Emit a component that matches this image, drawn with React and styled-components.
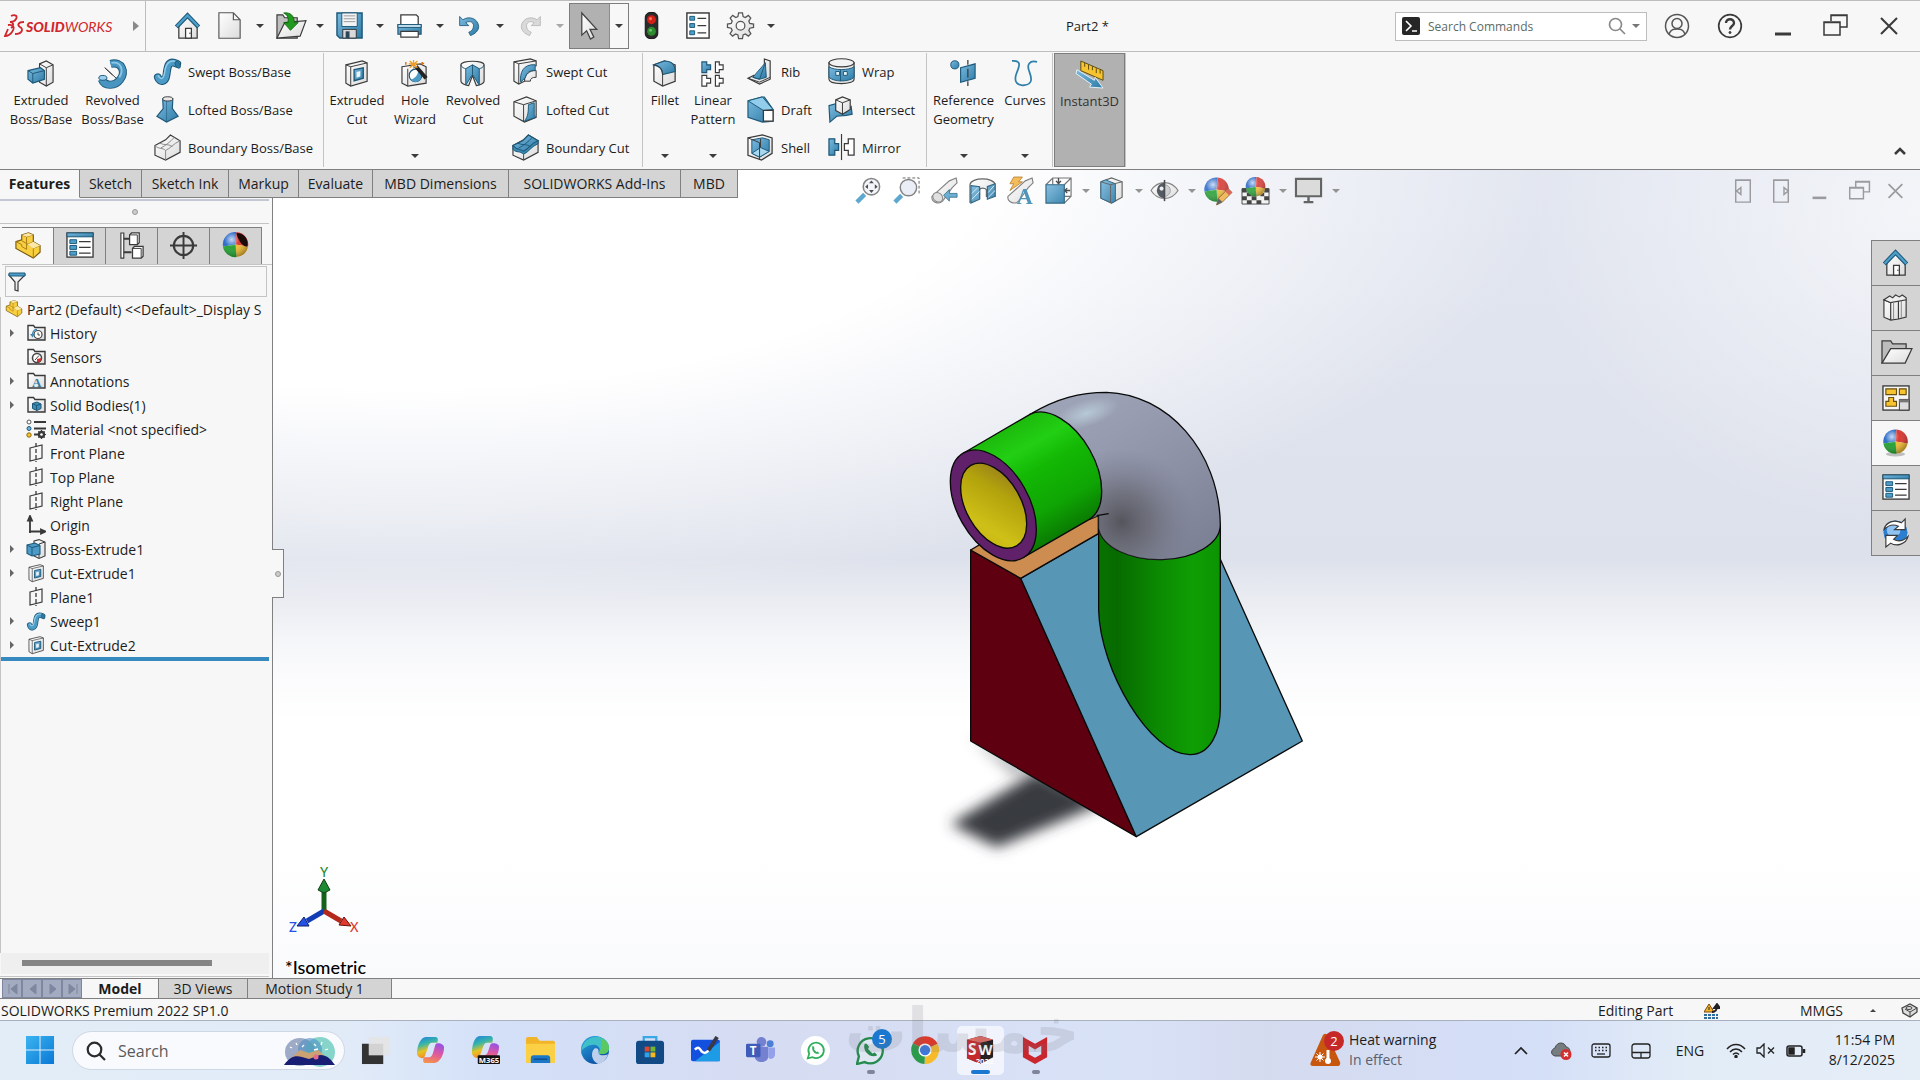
import React from 'react';
import styled, { createGlobalStyle } from 'styled-components';

const GlobalStyle = createGlobalStyle`
  * {
    box-sizing: border-box;
  }

  body {
    margin: 0;
    font-family: 'Open Sans', 'Noto Sans', sans-serif;
    font-size: 14px;
    color: #1c1c1c;
    background: #f7f7f7;
  }

  button {
    padding: 0;
    border: 0;
    background: none;
    font: inherit;
    color: inherit;
    cursor: pointer;
  }

  svg {
    display: block;
    flex-shrink: 0;
  }
`;

const Screen = styled.div`
  display: flex;
  flex-direction: column;
  min-height: 100vh;
`;

/* ---------- icons ---------- */

const K = '#3a3a3a';
const B = 'url(#blue)';
const W = 'url(#silver)';
const D = '#1d5878';

const DefsSvg = styled.svg`
  position: absolute;
`;

const SharedDefs = () => (
  <DefsSvg width="0" height="0" aria-hidden="true">
    <defs>
      <linearGradient id="blue" x1="0" y1="0" x2="1" y2="1">
        <stop offset="0" stopColor="#7dbbe0" />
        <stop offset="1" stopColor="#2c7ba6" />
      </linearGradient>
      <linearGradient id="silver" x1="0" y1="0" x2="1" y2="1">
        <stop offset="0" stopColor="#ffffff" />
        <stop offset="1" stopColor="#dcdcdc" />
      </linearGradient>
      <radialGradient id="gloss" cx="0.35" cy="0.3" r="0.75">
        <stop offset="0" stopColor="#fff" stopOpacity="0.75" />
        <stop offset="0.4" stopColor="#fff" stopOpacity="0.05" />
        <stop offset="1" stopColor="#000" stopOpacity="0.35" />
      </radialGradient>
      <linearGradient id="copilot" x1="0" y1="0" x2="0.3" y2="1">
        <stop offset="0" stopColor="#1e7fe0" />
        <stop offset="0.4" stopColor="#38b6a8" />
        <stop offset="0.7" stopColor="#e8c320" />
        <stop offset="1" stopColor="#f08a2c" />
      </linearGradient>
      <linearGradient id="copilotWarm" x1="0.6" y1="0" x2="0.3" y2="1">
        <stop offset="0" stopColor="#9b52e0" />
        <stop offset="0.5" stopColor="#e05a9c" />
        <stop offset="1" stopColor="#f7924a" />
      </linearGradient>
      <linearGradient id="winBlue" x1="0" y1="0" x2="1" y2="1">
        <stop offset="0" stopColor="#3bb4f0" />
        <stop offset="1" stopColor="#0a78d6" />
      </linearGradient>
      <linearGradient id="edge" x1="0" y1="0" x2="0.6" y2="1">
        <stop offset="0" stopColor="#2aa8e6" />
        <stop offset="1" stopColor="#0b4fa0" />
      </linearGradient>
    </defs>
  </DefsSvg>
);

const ball = (cx, cy, r) => (
  <g>
    <path d={`M${cx} ${cy}L${cx - r} ${cy + 2}A${r} ${r} 0 0 1 ${cx + 1} ${cy - r}z`} fill="#2566c8" />
    <path d={`M${cx} ${cy}L${cx + 1} ${cy - r}A${r} ${r} 0 0 1 ${cx + r} ${cy + 2}z`} fill="#d8302a" />
    <path d={`M${cx} ${cy}L${cx + r} ${cy + 2}A${r} ${r} 0 0 1 ${cx + 1} ${cy + r}z`} fill="#f0b92e" />
    <path d={`M${cx} ${cy}L${cx + 1} ${cy + r}A${r} ${r} 0 0 1 ${cx - r} ${cy + 2}z`} fill="#1e9e2c" />
    <circle cx={cx} cy={cy} r={r} fill="url(#gloss)" />
  </g>
);

const folder = (
  <path d="M2 17V2.5h5.500l1.500 2h10V17z" fill={W} stroke={K} strokeWidth="1.400" />
);

const art = {
  home: (
    <>
      <path d="M5 14V27H24V14L14 5z" fill={W} stroke={K} strokeWidth="1.300" />
      <path d="M12 27V17h6V27z" fill="#fff" stroke={K} strokeWidth="1.300" />
      <path d="M2.500 15.500L14 3.500L25.500 15.500" fill="none" stroke={D} strokeWidth="4.600" />
      <path d="M2.800 15L14 3.500L25.200 15" fill="none" stroke="#4d9fca" strokeWidth="2.400" />
      <circle cx="16.500" cy="22" r="0.800" fill={K} />
    </>
  ),
  page: (
    <path d="M3 0.800H18L25 8V27.200H3zM18 0.800V8H25" fill={W} stroke="#555" strokeWidth="1.200" />
  ),
  open: (
    <>
      <path d="M1 27V3h6l2 3h13v21z" fill="#bfbfbf" stroke={K} strokeWidth="1.200" />
      <path d="M1 27L9 11L31 9L25 25z" fill={W} stroke={K} strokeWidth="1.200" />
      <path d="M8 1C15 0 19 4 19 11H23L15 19L8 11H12.500C13 6 12 3 8 1z" fill="#1e9a1e" stroke="#0b5a0b" strokeWidth="0.800" />
    </>
  ),
  save: (
    <>
      <path d="M1 1H27V27H4L1 24z" fill={B} stroke={D} strokeWidth="1.500" />
      <path d="M6 1H22V15H6z" fill="#f4f4f4" stroke={D} />
      <path d="M8 4H20M8 7H20M8 10H20" stroke="#999" />
      <path d="M7 18H21V27H7z" fill="#d9d9d9" stroke="#333" />
      <path d="M10 20H14V27H10z" fill="#2b4658" />
    </>
  ),
  print: (
    <>
      <path d="M5 14V3H21L23 5V14z" fill="#fff" stroke={K} strokeWidth="1.300" />
      <path d="M2 13H26V23H2z" fill={B} stroke={D} strokeWidth="1.200" />
      <path d="M2 13H26V16H2z" fill="#c9e2f1" stroke={D} />
      <path d="M5 20H23V26H5z" fill="#fff" stroke={K} strokeWidth="1.200" />
    </>
  ),
  undo: (
    <path d="M2 3V14H13L9.500 10.500C15 7 20 11 18.500 16C18 19 16 21 13 22L15 26C21 24 25 20 25 15C24 5 13 2 6 7z" fill={B} stroke={D} strokeWidth="1" />
  ),
  redo: (
    <path d="M27 3V14H16L19.500 10.500C14 7 9 11 10.500 16C11 19 13 21 16 22L14 26C8 24 4 20 4 15C5 5 16 2 23 7z" fill="#d9d9d9" stroke="#b5b5b5" strokeWidth="1" />
  ),
  pointer: (
    <path d="M6 1V24L11 19.500L15 28L18.500 26L14.500 18H21.500z" fill={W} stroke="#444" strokeWidth="1.300" />
  ),
  traffic: (
    <>
      <rect x="7.500" y="0.500" width="13" height="27" rx="5" fill="#2b2b2b" stroke="#111" />
      <circle cx="14" cy="8" r="4.600" fill="#d32016" />
      <circle cx="14" cy="20" r="4.600" fill="#2d8a2d" />
      <circle cx="13" cy="7" r="1.500" fill="#ff7a66" />
      <circle cx="13" cy="19" r="1.500" fill="#6cc66c" />
    </>
  ),
  list: (
    <>
      <rect x="3" y="1" width="23" height="26" fill="#fff" stroke={K} strokeWidth="1.500" />
      <path d="M6 4.500h5v4h-5zM6 12h5v4h-5zM6 19.500h5v4h-5z" fill="#4d9fca" stroke={D} />
      <path d="M14 6.500h9M14 14h9M14 21.500h9" stroke={K} strokeWidth="1.300" />
    </>
  ),
  gear: (
    <>
      <path
        d="M12 1h4l.7 3.800 2.200.9 3.200-2.200 2.500 2.700-2 3.200 1 2.400 3.900.7v3.500l-3.900.8-1 2.300 2.100 3.300-2.600 2.600-3.200-2.200-2.200.9L16 27.500h-4l-.7-3.800-2.300-.9L5.800 25l-2.600-2.600 2.200-3.300-1-2.300-3.900-.8v-3.500l3.900-.7 1-2.400-2.100-3.200L5.900 3.500l3.200 2.200 2.200-.9z"
        fill={W}
        stroke="#555"
        strokeWidth="1.300"
      />
      <circle cx="14" cy="14.200" r="4.500" fill="#f7f7f7" stroke="#555" strokeWidth="1.300" />
    </>
  ),
  extBoss: (
    <>
      <path d="M13 4L20 1L27 5V23L20 27L13 23z" fill={W} stroke={K} strokeWidth="1.200" />
      <path d="M20 8L27 5M20 8V27M13 4L20 8" stroke={K} fill="none" />
      <path d="M1 11L14 8L18 11V20L6 24L1 20z" fill={B} stroke={D} strokeWidth="1.200" />
      <path d="M1 11L6 14L18 11M6 14V24" stroke={D} fill="none" />
    </>
  ),
  revBoss: (
    <>
      <path d="M12 4C24 1 28 13 22 20C17 27 6 28 3 20" fill="none" stroke={D} strokeWidth="8.500" />
      <path d="M12 4C24 1 28 13 22 20C17 27 6 28 3 20" fill="none" stroke="#4795c0" strokeWidth="6.500" />
      <path d="M13 3C23 1 26 11 21 18" fill="none" stroke="#8cc6e6" strokeWidth="2" />
      <ellipse cx="4" cy="18.500" rx="4.200" ry="2.500" fill="#9bd0ec" stroke={D} />
      <path d="M6 8L14 15.500M6 8L18 19" stroke={K} />
    </>
  ),
  sweep: (
    <>
      <path d="M4 20C6 26 12 25 13 17C14 8 15 2 24 6" fill="none" stroke={D} strokeWidth="8.200" strokeLinecap="round" />
      <path d="M4 20C6 26 12 25 13 17C14 8 15 2 24 6" fill="none" stroke="#4c9bc7" strokeWidth="6" strokeLinecap="round" />
      <path d="M4 18C7 23 10 22 11 15C12 6 16 2 22 3.500" fill="none" stroke="#90cbe8" strokeWidth="1.600" />
      <ellipse cx="24.500" cy="7" rx="2.200" ry="4" transform="rotate(-30 24.500 7)" fill="#2f7ba3" stroke={D} strokeWidth="0.800" />
    </>
  ),
  loft: (
    <>
      <path d="M9 3L9.500 13L3 21L13 27L25 21L19 13L19.500 3z" fill={B} stroke={D} strokeWidth="1.200" />
      <path d="M13 27L13 5" stroke={D} strokeWidth="0.600" />
      <ellipse cx="14.200" cy="3" rx="5.200" ry="2.200" fill="#e9e9e9" stroke={K} />
    </>
  ),
  boundary: (
    <>
      <path d="M1 12L12 6L17 1L27 7V19L12 27L1 22z" fill={W} stroke={K} strokeWidth="1.200" />
      <path d="M1 12C5 16 9 14 12 17C17 15 20 10 27 7M12 17V27M6 9.500C11 12 15 10 19 13M7 14.500C12 12 17 8 21 3.500" fill="none" stroke="#888" />
    </>
  ),
  extCut: (
    <>
      <path d="M3 5L20 1L25 3V22L8 27L3 24z" fill={W} stroke={K} strokeWidth="1.200" />
      <path d="M3 5L8 7L25 3M8 7V27" fill="none" stroke={K} />
      <path d="M11.500 10L21 8V19L11.500 21.500z" fill={B} stroke={D} strokeWidth="1.400" />
      <path d="M14 12.500L18 11.500V17L14 18.500z" fill="#e9f4fb" />
    </>
  ),
  hole: (
    <>
      <path d="M1 7L20 4L26 7V24L7 27L1 24z" fill={W} stroke={K} strokeWidth="1.200" />
      <path d="M7 9V27" stroke={K} />
      <circle cx="15" cy="16" r="6.500" fill="#fff" stroke={D} strokeWidth="1.200" />
      <path d="M10 20C14 20 18 15 18 10C22 13 22 18 19 21C16 24 12 23 10 20z" fill="#4c9bc7" />
      <path d="M14 5L26 19" stroke="#222" strokeWidth="4" />
      <path d="M13 4L16 7" stroke="#ddd" strokeWidth="3" />
      <path d="M13 0v9M8 4h10M9 1l8 7M17 1l-8 7" stroke="#f29a1f" strokeWidth="1.300" />
      <path d="M22 2v3M5 2v3M21 3.500h3" stroke="#d8701a" strokeWidth="1.500" />
    </>
  ),
  revCut: (
    <>
      <path d="M2 5C2 0 26 0 26 5V22C26 24 22 26 18 26.500L14 16L10 26.500C6 26 2 24 2 22z" fill={W} stroke={K} strokeWidth="1.200" />
      <path d="M14 5L7 9V26L14 15L21 26V9z" fill={B} stroke={D} />
      <path d="M14 5V15M2 5C3 8 5 8.500 7 9M26 5C25 8 23 8.500 21 9" fill="none" stroke={D} />
    </>
  ),
  sweptCut: (
    <>
      <path d="M2 4L19 1L25 3V8C17 9 13 13 13 24L7 27L2 24z" fill={W} stroke={K} strokeWidth="1.200" />
      <path d="M13 24C13 17 18 13 25 13V20C21 20 19 21 19 24z" fill={W} stroke={K} />
      <path d="M24 7C11 6 8 16 9 25L14 20C15 15 19 12 24 13z" fill={B} stroke={D} />
      <path d="M2 4L7 6L25 3M7 6V27" fill="none" stroke={K} />
    </>
  ),
  loftedCut: (
    <>
      <path d="M2 6L15 1L25 5V22L13 27L2 21z" fill={W} stroke={K} strokeWidth="1.200" />
      <path d="M2 6L12 9L25 5M12 9V27" fill="none" stroke={K} />
      <path d="M17 9L23 7V18C23 21 26 22 22 23L13 26C17 21 17 15 17 9z" fill={B} stroke={D} />
    </>
  ),
  boundaryCut: (
    <>
      <path d="M1 12L12 6L17 1L27 7V19L12 27L1 22z" fill={W} stroke={K} strokeWidth="1.200" />
      <path d="M1 12L11 7L17 1L27 7C20 10 18 15 12 18C8 15 5 17 1 12z" fill={B} stroke={D} strokeWidth="1.200" />
      <path d="M1 12V16C5 20 8 17 12 21C18 18 20 13 27 10V7C20 10 18 15 12 18C8 15 5 17 1 12z" fill="#3b89b3" stroke={D} />
      <path d="M12 21V27M6 9.500C11 12 15 10 19 13M7 14.500C12 12 17 8 21 3.500" fill="none" stroke={D} />
    </>
  ),
  fillet: (
    <>
      <path d="M3 5L14 1L25 5V22L12 27L3 22z" fill={W} stroke={K} strokeWidth="1.300" />
      <path d="M3 5L14 1C20 1 25 3 25 12L12 15C12 9 8 6 3 5z" fill={B} stroke={D} strokeWidth="1.200" />
      <path d="M12 15V27M3 5C8 6 12 9 12 15" fill="none" stroke={K} />
    </>
  ),
  linear: (
    <>
      <path d="M3 2H8V5H12V10H8V13H3z" fill={B} stroke={D} strokeWidth="1.200" />
      <path d="M17 2H21V5H25V10H21V13H17zM3 16H8V19H12V24H8V27H3zM17 16H21V19H25V24H21V27H17z" fill="#fff" stroke={K} strokeWidth="1.200" />
    </>
  ),
  rib: (
    <>
      <path d="M18 1L24 3V22L13 27L1 21L7 18L18 20z" fill={W} stroke={K} strokeWidth="1.200" />
      <path d="M19 5L20 20L13 22L6 20z" fill={B} stroke={D} />
      <path d="M6 20L13 22L19 5" fill="none" stroke={D} />
      <path d="M1 21L13 25L24 20" fill="none" stroke={K} />
    </>
  ),
  draft: (
    <>
      <path d="M1 5L15 1H18L27 14V26L16 27L1 22z" fill={B} stroke={D} strokeWidth="1.200" />
      <path d="M1 5L16 1L27 14L17 15z" fill="#92cdec" stroke={D} />
      <path d="M17 15H27V26H17z" fill="#fff" stroke={K} strokeWidth="1.300" />
    </>
  ),
  shell: (
    <>
      <path d="M1 4L16 1L26 4V20L15 27L1 22z" fill={W} stroke={K} strokeWidth="1.300" />
      <path d="M5 6L16 4L23 6V18L13 24L5 20z" fill={B} stroke={D} />
      <path d="M5 20L14 14L23 18L13 24z" fill="#a8d8f0" stroke={D} />
      <path d="M14 5V14M1 4L13 9V26" fill="none" stroke={K} />
    </>
  ),
  wrap: (
    <>
      <path d="M1 5V22C1 28 27 28 27 22V5z" fill={W} stroke={K} strokeWidth="1.200" />
      <path d="M1 9C6 13 22 13 27 9V20C22 25 6 25 1 20z" fill={B} stroke={D} />
      <path d="M8 14H12V18H8zM16 14H20V18H16zM13 12V24" fill="#e3f2fa" stroke={D} />
      <ellipse cx="14" cy="5" rx="13" ry="4.200" fill="#f2f2f2" stroke={K} strokeWidth="1.200" />
    </>
  ),
  intersect: (
    <>
      <path d="M1 10L8 8V15L18 17L24 11L25 19L19 20L9 21L2 27z" fill={B} stroke={D} strokeWidth="1.200" />
      <path d="M8 4L15 1L23 4V14L15 19L8 15z" fill={W} stroke={K} strokeWidth="1.200" />
      <path d="M8 4L15 7L23 4M15 7V19" fill="none" stroke={K} />
    </>
  ),
  mirror: (
    <>
      <path d="M1 5H7V10H11V17H7V22H1z" fill={B} stroke={D} strokeWidth="1.300" />
      <path d="M27 5H21V10H17V17H21V22H27z" fill="#fff" stroke={K} strokeWidth="1.300" />
      <path d="M14 0V27" stroke={K} strokeWidth="1.200" />
    </>
  ),
  refGeo: (
    <>
      <circle cx="5" cy="5" r="4.200" fill={B} stroke={D} />
      <path d="M11 8L26 4V19L11 23z" fill={B} stroke={D} strokeWidth="1.200" />
      <path d="M18.500 0V5M18.500 9V18M18.500 22V27" stroke={K} strokeWidth="1.300" />
    </>
  ),
  curves: (
    <path d="M1 1C11 0 9 6 6 13C2 23 7 27 14 26C22 25 22 20 19 12C16 5 19 0 27 2" fill="none" stroke="#2f7fa9" strokeWidth="1.800" />
  ),
  instant: (
    <>
      <path d="M5 0L28 10V20L5 10z" fill="#f7c32e" stroke="#5a4a10" />
      <path d="M9 2v4M13 4v5M17 5.500v4M21 7.500v5M25 9v4" stroke="#5a4a10" />
      <path d="M1 9L19 20L20 17L28 28L14 27L16 24L0 13z" fill={B} stroke="#e6f2f9" strokeWidth="1" />
    </>
  ),
  zoomFit: (
    <>
      <path d="M10 18L2 26" stroke="#4d9fca" strokeWidth="4.500" />
      <circle cx="17" cy="10" r="8.500" fill="#f3f5fa" stroke="#777" strokeWidth="1.600" />
      <path d="M17 3.500l2.500 3h-5zM17 16.500l2.500-3h-5zM10.500 10l3-2.500v5zM23.500 10l-3-2.500v5z" fill={K} />
    </>
  ),
  zoomArea: (
    <>
      <path d="M9 19L2 26" stroke="#4d9fca" strokeWidth="4.500" />
      <path d="M10 1H27V18" fill="none" stroke="#555" strokeDasharray="3 2" />
      <circle cx="16" cy="11" r="8.500" fill="#e9edf6" stroke="#777" strokeWidth="1.500" />
    </>
  ),
  prevView: (
    <>
      <path d="M1 20L19 4L26 1L27 6L22 11L12 25C8 29 0 26 1 20z" fill={W} stroke="#777" strokeWidth="1.200" />
      <ellipse cx="7" cy="21" rx="5.500" ry="4.500" transform="rotate(40 7 21)" fill="#ddd" stroke="#777" />
      <path d="M13 19L19 13V17H27V21H19V25z" fill="#5ba7cf" stroke={D} strokeWidth="0.800" />
    </>
  ),
  section: (
    <>
      <path d="M1 8C2 0 26 0 27 8V20H18V13C16 11 12 11 11 13V22L1 26z" fill={W} stroke="#555" strokeWidth="1.200" />
      <path d="M2 9L11 10V23L2 27zM19 10L27 7V20L19 23z" fill={B} stroke={D} strokeWidth="1.200" />
      <path d="M3 17L9 11M3 23L11 15M20 16L26 9M20 21L27 14" stroke="#d6ecf8" />
    </>
  ),
  annot: (
    <>
      <path d="M1 20L19 4L26 1L27 6L22 11L12 25C8 29 0 26 1 20z" fill={W} stroke="#777" strokeWidth="1.200" />
      <path d="M7 0H16L12 5H16L3 14L7 7H3z" fill="#f5b54a" stroke="#a86f18" strokeWidth="0.800" />
      <text x="10" y="28" fontFamily="Liberation Serif, serif" fontSize="23" fontWeight="700" fill="#3d8ab5">A</text>
    </>
  ),
  orient: (
    <>
      <path d="M1 8L8 1H27V20L20 27M20 8L27 1M8 1V8M20 20H27" fill="none" stroke="#666" strokeWidth="1.200" />
      <path d="M1 8H20V27H1z" fill={B} stroke={D} strokeWidth="1.200" />
      <path d="M14 1V6M11.500 4L14 7L16.500 4M26 14H21M23 11.500L20.500 14L23 16.500" fill="none" stroke={K} strokeWidth="1.400" />
    </>
  ),
  display: (
    <>
      <path d="M3 5L14 1L25 5V21L14 27L3 22z" fill={W} stroke="#555" strokeWidth="1.200" />
      <path d="M3 5L8 3L18 7V25L14 27L3 22z" fill={B} stroke={D} />
      <path d="M3 5L13 8L25 5M13 8V27" fill="none" stroke="#555" />
    </>
  ),
  hide: (
    <>
      <path d="M0 14C7 3 21 3 28 14C21 25 7 25 0 14z" fill={W} stroke="#777" strokeWidth="1.200" />
      <path d="M14 6A8 8 0 0 0 14 22z" fill="#444b55" />
      <path d="M14 8A6 6 0 0 1 14 20" fill="#c9ccd2" stroke="#999" />
      <circle cx="11" cy="12" r="2.200" fill="#e9edf2" />
      <path d="M14 3V25" stroke={K} strokeWidth="1.600" />
    </>
  ),
  appearance: (
    <>
      {ball(13, 13, 12.5)}
      <path d="M13 29L15 22L25 12L29 16L19 26z" fill="#f2b34e" stroke="#6a4a1a" strokeWidth="0.800" />
      <path d="M22 15L25 12L29 16L26 19z" fill="#d8564a" />
      <path d="M13 29L15 22L19 26z" fill="#555" />
    </>
  ),
  scene: (
    <>
      <path d="M0 12H28V28H0z" fill="#f4f4f4" stroke={K} />
      <path d="M0 12h5v4H0zM23 12h5v4h-5zM5 16h5v4H5zM19 16h4v4h-4zM0 20h5v4H0zM10 20h5v4h-5zM23 20h5v4h-5zM5 24h5v4H5zM15 24h5v4h-5z" fill="#333" />
      {ball(14, 10, 10)}
    </>
  ),
  monitor: (
    <>
      <path d="M1 2H27V20H1z" fill="#d9d9d9" stroke="#555" strokeWidth="2.200" />
      <path d="M14 20V25M9 26H19" stroke="#555" strokeWidth="2.500" />
    </>
  ),
  part: (
    <>
      <path d="M2 10L8 8V3L15 1L20 3V10L27 14V21L20 27L2 17z" fill="#f8cf3f" stroke="#7a5a10" strokeWidth="1.200" />
      <path d="M2 10L8 13V15L13 18V12L8 9M13 12L20 16V27M20 17L27 14M13 5V12M8 3L13 5L20 3M20 10L14 13" fill="none" stroke="#a97c18" />
      <path d="M8 3L15 1L20 3L13 5zM14 13L20 10L27 14L20 17z" fill="#fbe7a6" />
    </>
  ),
  propMgr: (
    <>
      <rect x="1" y="1" width="27" height="25" fill="#fff" stroke={K} strokeWidth="1.400" />
      <path d="M1 1H28V5H1z" fill={B} stroke={D} />
      <path d="M4 8h7v4H4zM4 14h7v4H4zM4 20h7v4H4z" fill="#4d9fca" stroke={D} />
      <path d="M13.500 10h12M13.500 16h12M13.500 22h12" stroke={K} strokeWidth="1.300" />
    </>
  ),
  config: (
    <>
      <path d="M3 1H6V27H3z" fill="#fff" stroke={K} strokeWidth="1.200" />
      <path d="M6 7H12M6 21H14" stroke={K} strokeWidth="2" />
      <path d="M12 3L14 1H22V11L20 13H12zM15 17L17 15H26V25L24 27H15z" fill="#fff" stroke={K} strokeWidth="1.300" />
      <path d="M12 3H20V13M15 17H24V27" fill="none" stroke={K} />
    </>
  ),
  target: (
    <>
      <circle cx="14" cy="14" r="10" fill="none" stroke={K} strokeWidth="2.200" />
      <path d="M14 0V28M0 14H28" stroke={K} strokeWidth="2" />
    </>
  ),
  dispMgr: (
    <>
      {ball(14, 13, 13)}
      <path d="M15 1C24 1 28 9 26 15C22 16 16 8 15 1z" fill="#1c0b0b" />
    </>
  ),
  books: (
    <>
      <path d="M2 6L9 9V27L2 24zM10 5L17 8V26L9 27V9zM18 4L25 6V24L17 26V8z" fill={W} stroke={K} strokeWidth="1.200" />
      <path d="M2 6L8 2L11 4L14 1L18 3L21 1L25 4V6L9 9z" fill="#eee" stroke={K} strokeWidth="1.200" />
      <path d="M12 8V26M20 7V25" stroke="#888" />
    </>
  ),
  folderOpen: (
    <>
      <path d="M0 25V2h9l2 3h14v6" fill="#bcbcbc" stroke={K} strokeWidth="1.300" />
      <path d="M0 25L9 10H31L24 25z" fill={W} stroke={K} strokeWidth="1.300" />
    </>
  ),
  palette: (
    <>
      <rect x="1" y="2" width="27" height="25" fill="#f6f6f6" stroke={K} strokeWidth="1.400" />
      <path d="M4 5H15V11H4zM18 5H25V11H18zM4 23V18H7V14H12V18H15V23z" fill="#f7c32e" stroke="#6a5010" strokeWidth="1.200" />
      <path d="M18 16H28V27H18z" fill="#ddd" stroke={K} />
      <path d="M18 16H28V19H18z" fill="#777" />
    </>
  ),
  sphere: (
    <>
      <ellipse cx="14" cy="26" rx="10" ry="2.500" fill="#999" fillOpacity="0.600" />
      {ball(14, 13, 12.5)}
    </>
  ),
  forum: (
    <>
      <circle cx="14" cy="14" r="13" fill="#2c7fd0" stroke="#ddd" />
      <circle cx="12" cy="12" r="7" fill="#a8d4fb" fillOpacity="0.800" />
      <path d="M2 11C4 3 13 0 20 4L24 0V11H13L17 7.500C12 5 7 6 2 11z" fill="#fff" stroke={K} strokeWidth="1.200" />
      <path d="M27 18C25 26 15 29 9 25L4 29V17H16L12 21C17 24 22 23 27 18z" fill="#fff" stroke={K} strokeWidth="1.200" />
    </>
  ),
};

// 20px drawings used in the feature tree
const treeArt = {
  history: (
    <>
      {folder}
      <circle cx="12" cy="11.500" r="4" fill="#fff" stroke="#444" strokeWidth="1.200" />
      <path d="M12 9.500V12H14" stroke="#444" fill="none" />
      <path d="M4 11L6.500 14.500L9 11z" fill="#3d8ab5" />
      <path d="M6.500 12C6.500 8 9 6.500 11 6.500" stroke="#3d8ab5" strokeWidth="1.500" fill="none" />
    </>
  ),
  sensors: (
    <>
      {folder}
      <circle cx="11" cy="11" r="4.500" fill="#fff" stroke="#444" strokeWidth="1.500" />
      <path d="M11 15.500A4.500 4.500 0 0 0 15.500 11L11 12z" fill="#d32f2f" />
      <path d="M9 13L13 8.500" stroke="#444" />
    </>
  ),
  annotations: (
    <>
      {folder}
      <text x="6" y="16" fontFamily="Liberation Serif, serif" fontSize="13" fontWeight="700" fill="#2f7ba3">A</text>
    </>
  ),
  bodies: (
    <>
      {folder}
      <path d="M6.500 8.500L11 7L15 9V13.500L11 15.500L6.500 13.500z" fill="#3d8ab5" stroke={D} />
      <path d="M6.500 8.500L10.500 10.500L15 9M10.500 10.500V15.500" stroke={D} fill="none" />
    </>
  ),
  material: (
    <>
      <path d="M8 3h12M8 9.500h12M8 15.500h5" stroke={K} strokeWidth="1.800" />
      <circle cx="3" cy="3" r="2" fill="#fff" stroke="#555" />
      <circle cx="3" cy="9.500" r="2" fill="#6bb3da" stroke={D} />
      <circle cx="3" cy="16" r="2.200" fill="#f7c32e" stroke="#8a6a10" />
      <circle cx="15.500" cy="15.500" r="2.500" fill="none" stroke={K} strokeWidth="2.400" />
      <path d="M15.500 11v9M11 15.500h9M12.300 12.300l6.400 6.400M18.700 12.300l-6.400 6.400" stroke={K} strokeWidth="1.200" />
      <circle cx="15.500" cy="15.500" r="1.300" fill="#fff" />
    </>
  ),
  plane: (
    <>
      <path d="M4 5L16 2V15L4 18z" fill="none" stroke={K} strokeWidth="1.200" />
      <path d="M10 0V19" stroke={K} strokeWidth="1.300" strokeDasharray="4 2" />
    </>
  ),
  origin: (
    <path d="M4 18V4M2 5.500L4 1L6 5.500zM3 16.500H16M15 14.500L19.500 16.500L15 18.500z" fill={K} stroke={K} strokeWidth="1.800" />
  ),
  bossSmall: (
    <>
      <path d="M8 2L13 0.600L19 3V17L13 19.400L8 17z" fill={W} stroke={K} strokeWidth="1.100" />
      <path d="M13 5L19 3M13 5V19" stroke={K} />
      <path d="M1 6L9 4L14 6.500V15L6 17L1 14.500z" fill="#4c9bc7" stroke={D} strokeWidth="1.100" />
      <path d="M1 6L6 8.500L14 6.500M6 8.500V17" stroke={D} />
    </>
  ),
};

const Icon = ({ name, size = 28 }) => (
  <svg width={size} height={size} viewBox="0 0 29 29" fill="none" overflow="visible" aria-hidden="true">
    {art[name]}
  </svg>
);

const TreeIcon = ({ name }) =>
  treeArt[name] ? (
    <svg width="20" height="20" viewBox="0 0 20 20" fill="none" aria-hidden="true">
      {treeArt[name]}
    </svg>
  ) : (
    <Icon name={name} size={19} />
  );

const Caret = styled.span`
  display: inline-block;
  width: 0;
  height: 0;
  border-left: 4px solid transparent;
  border-right: 4px solid transparent;
  border-top: 4px solid ${props => props.$color || '#3c3c3c'};
`;

/* ---------- title bar ---------- */

const TitleBar = styled.header`
  display: flex;
  align-items: center;
  height: 52px;
  padding-right: 5px;
  border-top: 1px solid #bdbdbd;
  border-bottom: 1px solid #bdbdbd;
`;

const Brand = styled.div`
  display: flex;
  align-items: center;
  align-self: stretch;
  width: 146px;
  padding: 0 6px 0 4px;
  margin-right: 21px;
  border-right: 1px solid #bdbdbd;
`;

const BrandName = styled.span`
  font-family: Lato, sans-serif;
  font-size: 14px;
  font-style: italic;
  color: #d1262c;

  b {
    font-weight: 900;
  }
`;

const BrandArrow = styled.button`
  margin-left: auto;
  border-left: 6px solid #8a8a8a;
  border-top: 5px solid transparent;
  border-bottom: 5px solid transparent;
`;

const ToolButton = styled.button`
  display: flex;
  align-items: center;
  justify-content: center;
  width: ${props => props.$w || 42}px;
  height: 44px;
`;

const PointerGroup = styled.div`
  display: flex;
  border: 1px solid #7d7d7d;

  button:first-child {
    background: #b1b1b1;
    border-right: 1px solid #8c8c8c;
  }
`;

const DocTitle = styled.h1`
  flex: 1;
  margin: 0;
  font-size: 13px;
  font-weight: 400;
  text-align: center;
`;

const SearchBox = styled.label`
  display: flex;
  align-items: center;
  width: 252px;
  height: 29px;
  padding: 0 0 0 6px;
  margin-right: 3px;
  border: 1px solid #bdbdbd;
  background: #fff;

  input {
    flex: 1;
    min-width: 0;
    padding: 0 0 0 8px;
    border: 0;
    outline: 0;
    font: inherit;
    font-size: 12px;
  }

  input::placeholder {
    color: #5c6b66;
    opacity: 1;
  }
`;

const quickTools = [
  { name: 'page', label: 'New' },
  { name: 'open', label: 'Open' },
  { name: 'save', label: 'Save' },
  { name: 'print', label: 'Print' },
  { name: 'undo', label: 'Undo', size: 24 },
  { name: 'redo', label: 'Redo', size: 24, muted: true },
];

const windowGlyphs = {
  previous: <path d="M1 1H18V27H1zM1 1.500H18M7 10L2 14L7 18z" />,
  next: <path d="M1 1H18V27H1zM1 1.500H18M13 10L18 14L13 18z" />,
  minimize: <path d="M2 22H18" strokeWidth="3" />,
  restore: <path d="M8 9V3H24V15H17M1 10H17V23H1zM1 10.500H17M8 3.500H24" />,
  close: <path d="M2 6L18 22M18 6L2 22" strokeWidth="2" />,
};

const WindowGlyph = ({ name }) => (
  <svg width={name === 'restore' ? 25 : 20} height="28" fill="none" stroke={K} strokeWidth="1.500" aria-hidden="true">
    {windowGlyphs[name]}
  </svg>
);

const AppTitleBar = () => (
  <TitleBar>
    <Brand>
      <svg width="22" height="24" viewBox="0 0 22 24" fill="none" stroke="#d1262c" strokeWidth="1.800" aria-hidden="true">
        <path d="M7 2C11 0 14 2 12 5C11 7 8 8 6 8C10 8 10 12 7 14M4 11C10 10 11 14 8 18C6 21 3 22 1 22L4 15" />
        <path d="M20 8C14 8 13 11 16 13C20 15 18 20 11 20" />
      </svg>
      <BrandName><b>SOLID</b>WORKS</BrandName>
      <BrandArrow aria-label="Show menus" />
    </Brand>
    <ToolButton aria-label="Home"><Icon name="home" /></ToolButton>
    {quickTools.map(tool => (
      <React.Fragment key={tool.name}>
        <ToolButton aria-label={tool.label}><Icon name={tool.name} size={tool.size} /></ToolButton>
        <ToolButton $w={18} aria-label={`${tool.label} options`}>
          <Caret $color={tool.muted ? '#a8a8a8' : undefined} />
        </ToolButton>
      </React.Fragment>
    ))}
    <PointerGroup>
      <ToolButton $w={40} aria-label="Select"><Icon name="pointer" /></ToolButton>
      <ToolButton $w={18} aria-label="Select options"><Caret /></ToolButton>
    </PointerGroup>
    <ToolButton $w={46} aria-label="Rebuild"><Icon name="traffic" /></ToolButton>
    <ToolButton $w={45} aria-label="File properties"><Icon name="list" /></ToolButton>
    <ToolButton aria-label="Options"><Icon name="gear" /></ToolButton>
    <ToolButton $w={18} aria-label="More options"><Caret /></ToolButton>
    <DocTitle>Part2 *</DocTitle>
    <SearchBox>
      <svg width="18" height="18" viewBox="0 0 18 18" fill="none" aria-hidden="true">
        <rect width="18" height="18" rx="2" fill="#262626" />
        <path d="M4 4L9 9L4 14M10 14H15" stroke="#fff" strokeWidth="1.600" />
      </svg>
      <input type="text" placeholder="Search Commands" aria-label="Search Commands" />
      <svg width="18" height="18" viewBox="0 0 18 18" fill="none" stroke="#8a8a8a" strokeWidth="1.700" aria-hidden="true">
        <circle cx="7.500" cy="7.500" r="6" />
        <path d="M12 12L17 17" />
      </svg>
      <ToolButton $w={20} aria-label="Search scope"><Caret $color="#777" /></ToolButton>
    </SearchBox>
    <ToolButton $w={53} aria-label="Account">
      <svg width="26" height="26" viewBox="0 0 26 26" fill="none" stroke="#555" strokeWidth="1.500" aria-hidden="true">
        <circle cx="13" cy="13" r="11.500" />
        <circle cx="13" cy="10.500" r="5" />
        <path d="M5 21C7 16 10 16 13 16S19 16 21 21" />
      </svg>
    </ToolButton>
    <ToolButton $w={53} aria-label="Help">
      <svg width="26" height="26" viewBox="0 0 26 26" fill="none" stroke={K} aria-hidden="true">
        <circle cx="13" cy="13" r="11.300" strokeWidth="1.700" />
        <path d="M9 10C9 5 17 5 17 10C17 13 13 13 13 16.500" strokeWidth="2.400" />
        <circle cx="13" cy="19.500" r="1" fill={K} />
      </svg>
    </ToolButton>
    {['minimize', 'restore', 'close'].map(name => (
      <ToolButton key={name} $w={53} aria-label={name}><WindowGlyph name={name} /></ToolButton>
    ))}
  </TitleBar>
);

/* ---------- ribbon ---------- */

const RibbonBar = styled.div`
  position: relative;
  display: flex;
  height: 118px;
  border-bottom: 1px solid #808080;
  font-size: 13px;
`;

const RibbonGroup = styled.section`
  display: flex;
  width: ${props => props.$w}px;
  padding-left: ${props => props.$pad || 0}px;
  margin: 1px 0 2px;
  border-right: 1px solid #c4c4c4;
`;

const BigCommand = styled.button`
  display: flex;
  flex-direction: column;
  align-items: center;
  gap: 3px;
  width: ${props => props.$w}px;
  padding-top: 7px;
  line-height: 19px;
  color: ${props => (props.$active ? '#333' : 'inherit')};
  background: ${props => (props.$active ? '#b1b1b1' : 'none')};
  border: ${props => (props.$active ? '1px solid #7d7d7d' : '0')};

  > ${Caret} {
    margin-top: auto;
    margin-bottom: 9px;
  }
`;

const CommandColumn = styled.div`
  display: flex;
  flex-direction: column;
  gap: 10px;
  padding-top: 5px;
  margin-left: ${props => props.$gap || 0}px;
  width: ${props => props.$w || 'auto'};
`;

const SmallCommand = styled.button`
  display: flex;
  align-items: center;
  gap: 6px;
  height: 28px;
  white-space: nowrap;
`;

const CollapseRibbon = styled.button`
  align-self: flex-end;
  margin: 0 14px 14px auto;
`;

const Command = ({ icon, lines, w, menu, active }) => (
  <BigCommand $w={w} $active={active}>
    <Icon name={icon} />
    <span>
      {lines.map(line => <div key={line}>{line}</div>)}
    </span>
    {menu && <Caret />}
  </BigCommand>
);

const Commands = ({ items, gap, w }) => (
  <CommandColumn $gap={gap} $w={w}>
    {items.map(([icon, text]) => (
      <SmallCommand key={text}>
        <Icon name={icon} />
        {text}
      </SmallCommand>
    ))}
  </CommandColumn>
);

const Ribbon = () => (
  <RibbonBar>
    <RibbonGroup $w={324} $pad={5}>
      <Command icon="extBoss" w={72} lines={['Extruded', 'Boss/Base']} />
      <Command icon="revBoss" w={71} lines={['Revolved', 'Boss/Base']} />
      <Commands gap={6} items={[['sweep', 'Swept Boss/Base'], ['loft', 'Lofted Boss/Base'], ['boundary', 'Boundary Boss/Base']]} />
    </RibbonGroup>
    <RibbonGroup $w={319} $pad={4}>
      <Command icon="extCut" w={58} lines={['Extruded', 'Cut']} />
      <Command icon="hole" w={58} lines={['Hole', 'Wizard']} menu />
      <Command icon="revCut" w={58} lines={['Revolved', 'Cut']} />
      <Commands gap={10} items={[['sweptCut', 'Swept Cut'], ['loftedCut', 'Lofted Cut'], ['boundaryCut', 'Boundary Cut']]} />
    </RibbonGroup>
    <RibbonGroup $w={284}>
      <Command icon="fillet" w={44} lines={['Fillet']} menu />
      <Command icon="linear" w={52} lines={['Linear', 'Pattern']} menu />
      <Commands gap={8} w="81px" items={[['rib', 'Rib'], ['draft', 'Draft'], ['shell', 'Shell']]} />
      <Commands items={[['wrap', 'Wrap'], ['intersect', 'Intersect'], ['mirror', 'Mirror']]} />
    </RibbonGroup>
    <RibbonGroup $w={126}>
      <Command icon="refGeo" w={73} lines={['Reference', 'Geometry']} menu />
      <Command icon="curves" w={50} lines={['Curves']} menu />
    </RibbonGroup>
    <RibbonGroup $w={73} $pad={1}>
      <Command icon="instant" w={71} lines={['Instant3D']} active />
    </RibbonGroup>
    <CollapseRibbon aria-label="Collapse ribbon">
      <svg width="12" height="8" fill="none" stroke={K} strokeWidth="2.500" aria-hidden="true">
        <path d="M1 7L6 2L11 7" />
      </svg>
    </CollapseRibbon>
  </RibbonBar>
);

/* ---------- workspace ---------- */

const Workspace = styled.main`
  position: relative;
  display: flex;
  flex: 1;
`;

// the tab strip lies over the top of the graphics area
const RibbonTabs = styled.nav`
  position: absolute;
  top: 0;
  left: 0;
  z-index: 2;
  display: flex;
  height: 28px;
`;

const RibbonTab = styled.button`
  width: ${props => props.$w}px;
  border-right: 1px solid #808080;
  border-bottom: 1px solid ${props => (props.$active ? '#f7f7f7' : '#808080')};
  background: ${props => (props.$active ? '#f7f7f7' : '#d4d4d4')};
  font-size: 14px;
  font-weight: ${props => (props.$active ? 700 : 400)};
  white-space: nowrap;
`;

const tabs = [
  ['Features', 80],
  ['Sketch', 62],
  ['Sketch Ink', 87],
  ['Markup', 70],
  ['Evaluate', 74],
  ['MBD Dimensions', 136],
  ['SOLIDWORKS Add-Ins', 172],
  ['MBD', 57],
];

const SidePanel = styled.aside`
  position: relative;
  display: flex;
  flex-direction: column;
  width: 273px;
  padding-top: 28px;
  border-right: 1px solid #808080;
  background: #f7f7f7;
`;

const PanelGrip = styled.div`
  display: flex;
  align-items: center;
  justify-content: center;
  height: 25px;
  margin: 1px 3px 3px 0;
  border-top: 2px solid #c4c8d2;
  border-bottom: 1px solid #c4c4c4;
`;

const Dot = styled.span`
  width: 6px;
  height: 6px;
  border: 1px solid #999;
  border-radius: 50%;
  background: #ccc;
`;

const ManagerTabs = styled.div`
  display: flex;
  margin-left: 2px;
  border-bottom: 1px solid #c4c4c4;
`;

const ManagerTab = styled.button`
  display: flex;
  align-items: center;
  justify-content: center;
  width: 52px;
  height: 37px;
  border-top: 1px solid #808080;
  border-right: 1px solid #808080;
  background: ${props => (props.$active ? '#f7f7f7' : '#d4d4d4')};
`;

const FilterBox = styled.label`
  display: flex;
  align-items: center;
  height: 31px;
  margin: 1px 5px 0;
  padding-left: 2px;
  border: 1px solid #c4c4c4;

  input {
    flex: 1;
    min-width: 0;
    border: 0;
    outline: 0;
    background: none;
  }
`;

const Tree = styled.ul`
  flex: 1;
  margin: 0 3px 0 0;
  padding: 0;
  border-left: 1px solid #c4c4c4;
  list-style: none;
  overflow: hidden;
`;

const TreeRow = styled.li`
  display: flex;
  align-items: center;
  gap: 4px;
  height: 24px;
  padding-left: ${props => (props.$root ? 4 : 9)}px;
  white-space: nowrap;
`;

const IconSlot = styled.span`
  display: flex;
  justify-content: center;
  width: 20px;
`;

const Expander = styled.button`
  width: 4px;
  height: 8px;
  margin-right: 8px;
  border-left: 4px solid ${props => (props.$open ? '#666' : 'transparent')};
  border-top: 4px solid transparent;
  border-bottom: 4px solid transparent;
`;

const RollbackBar = styled.li`
  height: 4px;
  background: #378ac0;
`;

const HScroll = styled.div`
  height: 21px;
  margin: 0 3px 2px 1px;
  padding: 7px 0 0 21px;
  background: #efefef;

  div {
    width: 77%;
    height: 6px;
    background: #858585;
  }
`;

const PanelEdge = styled.div`
  height: 2px;
  margin-right: 3px;
  border-top: 1px solid #c4c4c4;
`;

const PanelHandle = styled.button`
  position: absolute;
  top: 379px;
  left: 100%;
  display: flex;
  align-items: center;
  justify-content: center;
  width: 12px;
  height: 49px;
  border: 1px solid #808080;
  border-left: 0;
  background: #f7f7f7;
  z-index: 1;
`;

const treeItems = [
  ['history', 'History', true],
  ['sensors', 'Sensors', false],
  ['annotations', 'Annotations', true],
  ['bodies', 'Solid Bodies(1)', true],
  ['material', 'Material <not specified>', false],
  ['plane', 'Front Plane', false],
  ['plane', 'Top Plane', false],
  ['plane', 'Right Plane', false],
  ['origin', 'Origin', false],
  ['bossSmall', 'Boss-Extrude1', true],
  ['extCut', 'Cut-Extrude1', true],
  ['plane', 'Plane1', false],
  ['sweep', 'Sweep1', true],
  ['extCut', 'Cut-Extrude2', true],
];

const FeatureManager = () => (
  <SidePanel>
    <PanelGrip><Dot /></PanelGrip>
    <ManagerTabs>
      {['part', 'propMgr', 'config', 'target', 'dispMgr'].map((name, i) => (
        <ManagerTab key={name} $active={i === 0} aria-label={name}><Icon name={name} /></ManagerTab>
      ))}
    </ManagerTabs>
    <FilterBox>
      <svg width="18" height="20" viewBox="0 0 18 20" fill="none" aria-hidden="true">
        <path d="M1 3L7 10V18L10 19V10L17 3z" fill={W} stroke={K} strokeWidth="1.200" />
        <path d="M1 1H17V4H1z" fill="#4d9fca" stroke={D} />
      </svg>
      <input type="text" aria-label="Filter tree" />
    </FilterBox>
    <Tree>
      <TreeRow $root>
        <Icon name="part" size={18} />
        Part2 (Default) &lt;&lt;Default&gt;_Display S
      </TreeRow>
      {treeItems.map(([icon, text, open]) => (
        <TreeRow key={text}>
          <Expander $open={open} disabled={!open} aria-label={`Expand ${text}`} />
          <IconSlot><TreeIcon name={icon} /></IconSlot>
          {text}
        </TreeRow>
      ))}
      <RollbackBar />
    </Tree>
    <HScroll><div /></HScroll>
    <PanelEdge />
    <PanelHandle aria-label="Collapse panel"><Dot /></PanelHandle>
  </SidePanel>
);

const Viewport = styled.section`
  position: relative;
  display: flex;
  flex: 1;
  align-items: center;
  justify-content: center;
  overflow: hidden;
  background:
    linear-gradient(to bottom, rgba(255, 255, 255, 0) 48%, rgba(255, 255, 255, 0.6) 58%, #fff 69%, #fff 84%, #f9fafc 100%),
    radial-gradient(ellipse 24% 40% at 100% 5%, rgba(255, 255, 255, 0.6) 0%, rgba(255, 255, 255, 0) 100%),
    radial-gradient(ellipse 70% 54% at 8% 0%, #fff 50%, rgba(255, 255, 255, 0) 100%),
    linear-gradient(to bottom, #e2e6f0 0%, #dde1eb 48%, #e2e5ed 56%, #f4f5f8 68%);
`;

const ViewTools = styled.div`
  position: absolute;
  top: 3px;
  left: 0;
  right: 0;
  display: flex;
  justify-content: center;
  opacity: 0.9;

  button {
    height: 36px;
  }
`;

const DocControls = styled.div`
  position: absolute;
  top: 3px;
  right: 3px;
  display: flex;

  button {
    height: 36px;
  }
`;

const TaskPane = styled.nav`
  position: absolute;
  top: 70px;
  right: 0;
  display: flex;
  flex-direction: column;
  border-top: 1px solid #808080;
`;

const TaskTab = styled.button`
  display: flex;
  align-items: center;
  justify-content: center;
  width: 49px;
  height: 45px;
  border-left: 1px solid #808080;
  border-bottom: 1px solid #808080;
  background: ${props => (props.$active ? '#f7f7f7' : '#d4d4d4')};
`;

const Orientation = styled.div`
  position: absolute;
  left: 12px;
  bottom: 0;
  font-family: Lato, sans-serif;
  font-size: 18px;
  font-weight: 500;
  line-height: 22px;
  color: #000;

  svg {
    margin-bottom: 20px;
  }
`;

const viewTools = [
  ['zoomFit'],
  ['zoomArea'],
  ['prevView'],
  ['section'],
  ['annot'],
  ['orient', true],
  ['display', true],
  ['hide', true],
  ['appearance'],
  ['scene', true],
  ['monitor', true],
];

const bendPath = 'M300 133C380 85 450 67 530 67C710 72 868 240 871 465A183 105 0 0 1 506 475V437L478 448z';

const PartModel = () => (
  <svg width="468" height="592" viewBox="-201 -276 1404 1776" role="img" aria-label="Wedge block with bent pipe">
    <defs>
      <filter id="soft" x="-30%" y="-50%" width="160%" height="200%">
        <feGaussianBlur stdDeviation="20" />
      </filter>
      <linearGradient id="pipeSide" gradientUnits="userSpaceOnUse" x1="200" y1="190" x2="378" y2="506">
        <stop offset="0" stopColor="#1dba0c" />
        <stop offset="0.220" stopColor="#22cf14" />
        <stop offset="0.420" stopColor="#13b804" />
        <stop offset="0.750" stopColor="#0fa504" />
        <stop offset="1" stopColor="#0a7a02" />
      </linearGradient>
      <linearGradient id="pipeDown" x1="0" x2="1">
        <stop offset="0" stopColor="#087200" />
        <stop offset="0.150" stopColor="#076a00" />
        <stop offset="0.500" stopColor="#0c8b02" />
        <stop offset="0.780" stopColor="#0f9e04" />
        <stop offset="1" stopColor="#0c9302" />
      </linearGradient>
      <linearGradient id="bore" gradientUnits="userSpaceOnUse" x1="120" y1="290" x2="250" y2="530">
        <stop offset="0" stopColor="#8f7420" />
        <stop offset="0.350" stopColor="#b3a30c" />
        <stop offset="0.750" stopColor="#cfc018" />
        <stop offset="1" stopColor="#c3b410" />
      </linearGradient>
      <linearGradient id="elbow" gradientUnits="userSpaceOnUse" x1="470" y1="80" x2="760" y2="560">
        <stop offset="0" stopColor="#9da3b6" />
        <stop offset="0.450" stopColor="#9195aa" />
        <stop offset="1" stopColor="#7d8195" />
      </linearGradient>
      <radialGradient id="elbowShade" gradientUnits="userSpaceOnUse" cx="575" cy="455" r="220">
        <stop offset="0" stopColor="#4f4f55" stopOpacity="0.900" />
        <stop offset="0.400" stopColor="#62636b" stopOpacity="0.650" />
        <stop offset="1" stopColor="#777b8c" stopOpacity="0" />
      </radialGradient>
      <radialGradient id="elbowLight" gradientUnits="userSpaceOnUse" cx="470" cy="130" r="100" gradientTransform="rotate(-18 470 130) translate(0 78) scale(1 0.400)">
        <stop offset="0" stopColor="#b7c8d6" />
        <stop offset="1" stopColor="#b7c8d6" stopOpacity="0" />
      </radialGradient>
    </defs>
    <path d="M115 1095L330 1215L250 1215z" fill="#55565e" filter="url(#soft)" opacity="0.500" />
    <path d="M62 1362L320 1205L520 1300L200 1432z" fill="#393a3f" filter="url(#soft)" />
    <g stroke="#0a0a0a" strokeWidth="4" strokeLinejoin="round">
      <path d="M122 540L272 625L619 1400L122 1113z" fill="#5f0010" />
      <path d="M272 625L505 491L871 568L1117 1113L619 1400z" fill="#5896b6" />
      <path d="M122 540L190 500L478 440L505 437V491L272 625z" fill="#cd8d50" />
      <path d="M506 465V720C510 900 660 1154 780 1154C840 1154 871 1090 871 1010V465z" fill="url(#pipeDown)" />
      <path d={bendPath} fill="url(#elbow)" />
      <path d={bendPath} fill="url(#elbowShade)" stroke="none" />
      <path d={bendPath} fill="url(#elbowLight)" stroke="none" />
      <path d="M101 249L300 133A181 107 60.4 0 1 478 448L279 563z" fill="url(#pipeSide)" />
      <ellipse cx="190" cy="406" rx="181" ry="107" transform="rotate(60.4 190 406)" fill="#60206a" />
      <ellipse cx="191" cy="407" rx="139" ry="82" transform="rotate(60.4 191 407)" fill="url(#bore)" />
      <path d="M500 437L536 431" fill="none" />
    </g>
  </svg>
);

const Triad = () => (
  <svg width="76" height="74" viewBox="0 -6 76 74" fontFamily="Lato, sans-serif" fontSize="13" aria-hidden="true">
    <path d="M39 43V22" stroke="#14611a" strokeWidth="5" />
    <path d="M39 11L45 22L39 25L33 22z" fill="#1f8a34" stroke="#0d3d12" />
    <path d="M39 43L22 53" stroke="#123cb4" strokeWidth="5" />
    <path d="M12 58L19 49L24 58z" fill="#2452e6" stroke="#0c1f6a" />
    <path d="M39 43L56 53" stroke="#b5281c" strokeWidth="5" />
    <path d="M66 58L59 49L54 57z" fill="#e03a30" stroke="#6a100c" />
    <text x="35" y="9" fill="#1f8a34">Y</text>
    <text x="4" y="64" fill="#2452e6">Z</text>
    <text x="65" y="64" fill="#e03a30">X</text>
  </svg>
);

const GraphicsArea = () => (
  <Viewport>
    <PartModel />
    <ViewTools>
      {viewTools.map(([name, menu]) => (
        <React.Fragment key={name}>
          <ToolButton $w={38} aria-label={name}><Icon name={name} /></ToolButton>
          {menu && <ToolButton $w={15} aria-label={`${name} options`}><Caret $color="#8a8a8a" /></ToolButton>}
        </React.Fragment>
      ))}
    </ViewTools>
    <DocControls>
      {['previous', 'next', 'minimize', 'restore', 'close'].map(name => (
        <ToolButton key={name} $w={38} aria-label={`${name} document`}>
          <svg width="24" height="24" viewBox="0 0 26 28" fill="none" stroke="#9b9b9f" strokeWidth="1.700" aria-hidden="true">
            {windowGlyphs[name]}
          </svg>
        </ToolButton>
      ))}
    </DocControls>
    <TaskPane>
      {['home', 'books', 'folderOpen', 'palette', 'sphere', 'propMgr', 'forum'].map(name => (
        <TaskTab key={name} $active={name === 'sphere'} aria-label={name}><Icon name={name} /></TaskTab>
      ))}
    </TaskPane>
    <Orientation>
      <Triad />
      *Isometric
    </Orientation>
  </Viewport>
);

/* ---------- bottom tabs and status ---------- */

const SheetTabs = styled.nav`
  display: flex;
  height: 21px;
  border-top: 1px solid #808080;
  border-bottom: 1px solid #808080;
`;

const Pager = styled.div`
  display: flex;
  padding-left: 2px;

  button {
    display: flex;
    align-items: center;
    justify-content: center;
    width: 20px;
    border: 1px solid #7e879f;
    background: #a3abc0;
  }
`;

const SheetTab = styled.button`
  width: ${props => props.$w}px;
  padding-right: ${props => props.$pad || 0}px;
  border-right: 1px solid #808080;
  background: ${props => (props.$active ? '#f7f7f7' : '#d4d4d4')};
  font-weight: ${props => (props.$active ? 700 : 400)};
  line-height: 19px;
  white-space: nowrap;
`;

const StatusBar = styled.footer`
  display: flex;
  align-items: center;
  height: 22px;
  padding: 2px 2px 0 1px;
  border-bottom: 1px solid #a9b0bf;
`;

const StatusField = styled.span`
  display: flex;
  align-items: center;
  width: ${props => props.$w}px;
`;

const StatusStart = styled.span`
  flex: 1;
`;

const UpCaret = styled.span`
  border-left: 3px solid transparent;
  border-right: 3px solid transparent;
  border-bottom: 3px solid #444;
`;

const pagerPaths = ['M4 2V12M12 2L6 7L12 12z', 'M11 2L5 7L11 12z', 'M5 2L11 7L5 12z', 'M12 2V12M4 2L10 7L4 12z'];

const BottomBars = () => (
  <>
    <SheetTabs>
      <Pager>
        {pagerPaths.map((d, i) => (
          <button key={d} aria-label={`Scroll tabs ${i + 1}`}>
            <svg width="15" height="14" fill="#7e879f" stroke="#7e879f" aria-hidden="true"><path d={d} /></svg>
          </button>
        ))}
      </Pager>
      <SheetTab $w={77} $active>Model</SheetTab>
      <SheetTab $w={89}>3D Views</SheetTab>
      <SheetTab $w={144} $pad={10}>Motion Study 1</SheetTab>
    </SheetTabs>
    <StatusBar>
      <StatusStart>SOLIDWORKS Premium 2022 SP1.0</StatusStart>
      <StatusField $w={106}>Editing Part</StatusField>
      <StatusField $w={96}>
        <svg width="16" height="16" viewBox="0 0 16 16" fill="none" aria-hidden="true">
          <path d="M5 1L10 9H0z" fill="#f7b52e" stroke="#7a4a08" />
          <path d="M5 4V7" stroke="#222" />
          <path d="M8 9C12 9 13 7 13 3M10 5L13 1L16 5z" stroke="#222" strokeWidth="1.800" />
          <path d="M0 12H14M0 15H14" stroke="#2f6fa0" strokeWidth="2" strokeDasharray="3 1" />
        </svg>
      </StatusField>
      <StatusField $w={70}>MMGS</StatusField>
      <StatusField $w={31}><UpCaret /></StatusField>
      <svg width="17" height="15" viewBox="0 0 17 15" fill="none" stroke="#444" aria-hidden="true">
        <path d="M1 5L9 1L16 5V9L9 14L2 10z" fill="#ddd" strokeWidth="1.300" />
        <path d="M4 6L9 9L16 5M9 9V14" />
        <ellipse cx="8" cy="5" rx="3" ry="1.500" />
      </svg>
    </StatusBar>
  </>
);

/* ---------- taskbar ---------- */

const Taskbar = styled.footer`
  position: relative;
  display: flex;
  align-items: center;
  height: 59px;
  padding: 0 25px 0 17px;
  background: linear-gradient(to right, #e3edf7 0%, #e1ebf8 18%, #d3e0f8 26%, #d6dcf2 40%, #d8e2f7 58%, #d5dbef 66%, #d4dff8 80%, #e2ecf7 88%, #e5eef7 100%);
`;

const TaskButton = styled.button`
  position: relative;
  display: flex;
  align-items: center;
  justify-content: center;
  width: 47px;
  height: 49px;
  margin-right: 8px;
  border-radius: 5px;
  background: ${props => (props.$active ? 'rgba(255, 255, 255, 0.65)' : 'none')};

  &::after {
    content: '';
    position: absolute;
    bottom: 1px;
    width: ${props => (props.$active ? 19 : 8)}px;
    height: 4px;
    border-radius: 2px;
    background: ${props => (props.$active ? '#1a78d0' : props.$running ? '#80859a' : 'transparent')};
  }
`;

const WinSearch = styled.label`
  display: flex;
  align-items: center;
  width: 273px;
  height: 39px;
  margin-right: 7px;
  padding: 0 8px 0 13px;
  border: 1px solid #cfd6e4;
  border-radius: 20px;
  background: #f9fafe;

  input {
    flex: 1;
    min-width: 0;
    padding: 0 0 0 12px;
    border: 0;
    outline: 0;
    background: none;
    font: inherit;
    font-size: 16px;
  }

  input::placeholder {
    color: #5a5a5a;
    opacity: 1;
  }
`;

const Watermark = styled.span`
  position: absolute;
  top: -20px;
  left: 44%;
  z-index: 3;
  font-family: 'DejaVu Sans', sans-serif;
  font-size: 62px;
  font-weight: 700;
  line-height: 60px;
  color: rgba(110, 112, 125, 0.16);
  pointer-events: none;
`;

const Badge = styled.span`
  position: absolute;
  top: ${props => props.$top}px;
  right: ${props => props.$right}px;
  width: 20px;
  height: 20px;
  border-radius: 50%;
  background: ${props => props.$color};
  color: #fff;
  font-size: 13px;
  line-height: 20px;
  text-align: center;
`;

const Weather = styled.button`
  display: flex;
  align-items: center;
  gap: 8px;
  width: 191px;
  margin-left: auto;
  padding-bottom: 2px;
  text-align: left;
  font-size: 14px;
  line-height: 20px;

  small {
    display: block;
    font-size: 14px;
    color: #5b6070;
  }
`;

const WeatherIcon = styled.span`
  position: relative;
  width: 31px;
  height: 34px;
`;

const TraySlot = styled.button`
  display: flex;
  align-items: center;
  justify-content: center;
  width: ${props => props.$w || 40}px;
  height: 40px;
  font-size: 14px;
`;

const Clock = styled.time`
  width: 82px;
  padding-bottom: 2px;
  font-size: 14px;
  line-height: 20px;
  text-align: right;
`;

const taskArt = {
  start: <path d="M0 0H14V14H0zM15 0H29V14H15zM0 15H14V29H0zM15 15H29V29H15z" fill="url(#winBlue)" />,
  taskView: (
    <>
      <path d="M1 8H23V29H1z" fill="#333" />
      <path d="M8 1H29V20H8z" fill="#e4e4e4" fillOpacity="0.900" />
    </>
  ),
  copilot: (
    <>
      <path d="M10 1H20C23 1 23 4 22 7L17 7C14 7 13 9 12 13L9 21C8 25 1 22 1 18C1 10 5 1 10 1z" fill="url(#copilot)" />
      <path d="M19 28H10C7 28 7 25 8 22L13 22C16 22 17 20 18 16L20 9C22 6 29 8 29 12C29 20 24 28 19 28z" fill="url(#copilotWarm)" />
    </>
  ),
  m365: (
    <>
      <path d="M9 0H20C23 0 23 4 22 7L17 7C14 7 13 9 12 13L9 21C8 25 1 22 1 17C1 9 4 0 9 0z" fill="url(#copilot)" />
      <path d="M19 26H10C7 26 7 24 8 20L13 20C16 20 17 18 18 15L20 9C22 6 29 8 29 11C29 19 24 26 19 26z" fill="url(#copilotWarm)" />
      <rect x="7" y="20" width="23" height="9" rx="1" fill="#111" />
      <text x="8" y="27.500" fontSize="8" fontWeight="700" fill="#fff">M365</text>
    </>
  ),
  files: (
    <>
      <path d="M0 3Q0 1 2 1H11L14 5H28Q30 5 30 7V26Q30 28 28 28H2Q0 28 0 26z" fill="#f2b428" />
      <path d="M0 8H30V26Q30 28 28 28H2Q0 28 0 26z" fill="#fbd044" />
      <path d="M5 28V23Q5 20 8 20H22Q25 20 25 23V28z" fill="#1b78c8" />
      <path d="M8 24H22" stroke="#0e4d8c" strokeWidth="1.500" />
    </>
  ),
  edge: (
    <>
      <circle cx="14.500" cy="14.500" r="14.500" fill="url(#edge)" />
      <path d="M8 3C20 -4 32 6 28.500 15C26 20 18 19 18 17C21 15 19 9 13 9C8 9 3 12 0 16C1 9 4 5 8 3z" fill="#3fc0c8" />
      <path d="M20 2C29 5 31 13 27 17C24 19.500 18 19 18 17C22 13 23 7 20 2z" fill="#5cc860" />
      <path d="M18 17C18 20 24 21 28 19C26 25 22 28 18 29C10 26 10 16 14 13C17 12 19 14 18 17z" fill="#dbe3f7" fillOpacity="0.850" />
    </>
  ),
  store: (
    <>
      <path d="M8 6V1H21V6" fill="none" stroke="#39a9e6" strokeWidth="2.400" />
      <rect x="0" y="5" width="29" height="24" rx="3" fill="#124a86" />
      <path d="M9 11H14V16H9z" fill="#e0452f" /><path d="M15 11H20V16H15z" fill="#74b72e" />
      <path d="M9 17H14V22H9z" fill="#2fa3e8" /><path d="M15 17H20V22H15z" fill="#f5b91f" />
    </>
  ),
  board: (
    <>
      <rect x="0" y="4" width="30" height="22" rx="2" fill="#1450e0" />
      <path d="M4 26L30 6V26z" fill="#1d9be6" />
      <path d="M4 14C8 10 9 13 11 16C14 19 16 17 19 14" fill="none" stroke="#fff" strokeWidth="2.500" />
      <path d="M18 15L27 1" stroke="#3a3a44" strokeWidth="4" />
    </>
  ),
  teams: (
    <>
      <circle cx="16" cy="6" r="5" fill="#7480d0" /><circle cx="25" cy="8" r="3.600" fill="#4d7fd6" />
      <path d="M9 11H23V21C23 29 9 29 9 21z" fill="#7480d0" />
      <path d="M23 12H30V19C30 24 24 25 23 22z" fill="#93a0ea" />
      <rect x="0" y="8" width="15" height="14" rx="1.500" fill="#3f5cb8" />
      <text x="4" y="19.500" fontSize="12" fontWeight="700" fill="#fff">T</text>
    </>
  ),
  chat: (
    <>
      <circle cx="15" cy="15" r="15" fill="#fff" />
      <path d="M7 23L8.500 18.500A8 8 0 1 1 12 22z" fill="none" stroke="#2fae5c" strokeWidth="1.800" />
      <path d="M12 10C10 15 15 20 19 18L17.500 16L16 16.500L13.500 14L14 12.500L12.500 10z" fill="#2fae5c" />
    </>
  ),
  whatsapp: (
    <>
      <path d="M1 29L3 21A13 13 0 1 1 9 27z" fill="#dfe8f2" stroke="#248a4e" strokeWidth="2.400" />
      <path d="M9 8C6 15 15 24 22 20L19.500 17L17 18L12.500 13.500L13.500 11L11 8z" fill="#248a4e" />
    </>
  ),
  chrome: (
    <>
      <path d="M14.500 14.500L2 7.500A14.500 14.500 0 0 1 27.500 8z" fill="#d93a2b" />
      <path d="M14.500 14.500L27.500 8A14.500 14.500 0 0 1 14 29z" fill="#f6bb2a" />
      <path d="M14.500 14.500L14 29A14.500 14.500 0 0 1 2 7.500z" fill="#2c9a4b" />
      <circle cx="14.500" cy="14.500" r="6.800" fill="#fff" /><circle cx="14.500" cy="14.500" r="5.300" fill="#3c78e0" />
    </>
  ),
  solidworks: (
    <>
      <path d="M1 4L15 0L28 4V22L15 29L1 23z" fill="#262022" />
      <path d="M1 4L15 7V29L1 23z" fill="#c42a2c" /><path d="M1 4L15 0L28 4L15 7z" fill="#e26a60" />
      <text x="2" y="20" fontSize="16" fontWeight="700" fill="#fff">S</text>
      <text x="13" y="20" fontSize="15" fontWeight="700" fill="#fff">W</text>
      <text x="10" y="29" fontSize="8" fontWeight="700" fill="#fff">2022</text>
    </>
  ),
  mcafee: <path d="M2 1L14.500 8L27 1V22L14.500 29L2 22zM8 10V19L14.500 22.500L21 19V10L14.500 14z" fill="#c9262e" fillRule="evenodd" />,
};

const TaskIcon = ({ name }) => (
  <svg width="29" height="29" viewBox="0 0 30 30" aria-hidden="true">
    {taskArt[name]}
  </svg>
);

const taskApps = ['taskView', 'copilot', 'm365', 'files', 'edge', 'store', 'board', 'teams', 'chat', 'whatsapp', 'chrome', 'solidworks', 'mcafee'];

const WindowsTaskbar = () => (
  <Taskbar>
    <TaskButton aria-label="Start"><TaskIcon name="start" /></TaskButton>
    <WinSearch>
      <svg width="20" height="20" viewBox="0 0 20 20" fill="none" stroke="#2b2b2b" strokeWidth="2.200" aria-hidden="true">
        <circle cx="8.500" cy="8.500" r="6.800" />
        <path d="M13.500 13.500L19 19" />
      </svg>
      <input type="text" placeholder="Search" aria-label="Search" />
      <svg width="54" height="32" viewBox="0 0 54 32" aria-hidden="true">
        <ellipse cx="18" cy="17" rx="15" ry="14" fill="#8797b8" opacity="0.800" />
        <ellipse cx="38" cy="17" rx="15" ry="15" fill="#55c3b4" opacity="0.700" />
        <ellipse cx="28" cy="15" rx="12" ry="12" fill="#4f8fc4" opacity="0.600" />
        <path d="M8 24L18 15L27 18L36 15L46 24L30 28z" fill="#cda273" />
        <path d="M2 30C8 21 14 20 20 22L27 24L38 20C46 20 50 26 53 30z" fill="#181e74" />
        <path d="M8 12l2 1M14 8l1 2M22 10l-2 2M32 9l2 2M40 7l-1 3M46 14l-3 1M36 14l-4 1" stroke="#fff" strokeWidth="1.300" />
        <circle cx="34" cy="22" r="2.500" fill="#e86a8a" />
      </svg>
    </WinSearch>
    {taskApps.map(name => (
      <TaskButton
        key={name}
        aria-label={name}
        $active={name === 'solidworks'}
        $running={name === 'whatsapp' || name === 'mcafee'}
      >
        <TaskIcon name={name} />
        {name === 'whatsapp' && <Badge $top={3} $right={2} $color="#1a78d0">5</Badge>}
      </TaskButton>
    ))}
    <Weather>
      <WeatherIcon>
        <svg width="31" height="34" viewBox="0 0 31 34" fill="none" aria-hidden="true">
          <path d="M13 2Q16 -1 18 3L30 29Q31 33 27 33H3Q-1 33 1 29z" fill="#c7570e" />
          <circle cx="10" cy="24" r="2.500" fill="#fff" />
          <path d="M10 19v10M5 24h10M6.500 20.500l7 7M13.500 20.500l-7 7" stroke="#fff" />
          <path d="M18 17V27" stroke="#fff" strokeWidth="3" />
          <circle cx="18" cy="28" r="3" fill="#fff" />
        </svg>
        <Badge $top={-2} $right={-3} $color="#c62828">2</Badge>
      </WeatherIcon>
      <span>
        Heat warning
        <small>In effect</small>
      </span>
    </Weather>
    <TraySlot aria-label="Show hidden icons">
      <svg width="14" height="9" fill="none" stroke="#222" strokeWidth="1.700" aria-hidden="true"><path d="M1 8L7 2L13 8" /></svg>
    </TraySlot>
    <TraySlot aria-label="OneDrive">
      <svg width="21" height="18" viewBox="0 0 21 18" fill="none" aria-hidden="true">
        <path d="M4 14C-1 13 0 7 4 6C6 -1 14 0 15 5C20 5 20 13 16 14z" fill="#777c80" stroke="#44484c" />
        <circle cx="15" cy="12.500" r="5.500" fill="#d32f2f" />
        <path d="M13 10.500L17 14.500M17 10.500L13 14.500" stroke="#fff" strokeWidth="1.500" />
      </svg>
    </TraySlot>
    <TraySlot aria-label="Touch keyboard">
      <svg width="20" height="15" viewBox="0 0 20 15" fill="none" stroke="#222" strokeWidth="1.300" aria-hidden="true">
        <rect x="1" y="1" width="18" height="13" rx="2" />
        <path d="M4 4.500h12M4 7.500h12" strokeDasharray="1.500 2" strokeWidth="1.600" />
        <path d="M6 11h8" />
      </svg>
    </TraySlot>
    <TraySlot aria-label="Touchpad">
      <svg width="20" height="16" viewBox="0 0 20 16" fill="none" stroke="#222" strokeWidth="1.300" aria-hidden="true">
        <rect x="1" y="1" width="18" height="14" rx="2.500" />
        <path d="M1 9.500H19M10 9.500V15" />
      </svg>
    </TraySlot>
    <TraySlot $w={58}>ENG</TraySlot>
    <TraySlot $w={34} aria-label="Wi-Fi">
      <svg width="20" height="15" viewBox="0 0 20 15" fill="none" stroke="#222" strokeWidth="1.500" aria-hidden="true">
        <path d="M1 6C6 0 14 0 19 6M4 9C7.500 5 12.500 5 16 9M7 11.500C9 9.500 11 9.500 13 11.500" />
        <circle cx="10" cy="13.500" r="1" fill="#222" />
      </svg>
    </TraySlot>
    <TraySlot $w={26} aria-label="Volume">
      <svg width="20" height="15" viewBox="0 0 20 15" fill="none" stroke="#222" strokeWidth="1.300" aria-hidden="true">
        <path d="M1 5H4L8 1V14L4 10H1z" />
        <path d="M12 4.500L18 10.500M18 4.500L12 10.500" />
      </svg>
    </TraySlot>
    <TraySlot $w={34} aria-label="Battery">
      <svg width="20" height="12" viewBox="0 0 20 12" fill="none" stroke="#222" strokeWidth="1.500" aria-hidden="true">
        <rect x="1" y="1" width="15" height="10" rx="2" />
        <path d="M3 3H8V9H3z" fill="#222" />
        <path d="M18 4V8" strokeWidth="2.500" />
      </svg>
    </TraySlot>
    <Clock>
      11:54 PM
      <br />
      8/12/2025
    </Clock>
    <Watermark aria-hidden="true">خمسات</Watermark>
  </Taskbar>
);

const App = () => (
  <Screen>
    <GlobalStyle />
    <SharedDefs />
    <AppTitleBar />
    <Ribbon />
    <Workspace>
      <RibbonTabs>
        {tabs.map(([text, w], i) => (
          <RibbonTab key={text} $w={w} $active={i === 0}>{text}</RibbonTab>
        ))}
      </RibbonTabs>
      <FeatureManager />
      <GraphicsArea />
    </Workspace>
    <BottomBars />
    <WindowsTaskbar />
  </Screen>
);

export default App;
